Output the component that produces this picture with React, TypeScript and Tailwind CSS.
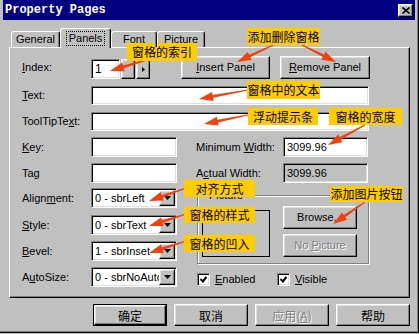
import React from 'react';

// win95 style bevels
const raised =
  'border border-t-white border-l-white border-r-black border-b-black shadow-[inset_-1px_-1px_0_#808080,inset_1px_1px_0_#dfdfdf] bg-[#c0c0c0]';
const sunken =
  'border border-t-[#808080] border-l-[#808080] border-r-white border-b-white shadow-[inset_1px_1px_0_#000000,inset_-1px_-1px_0_#dfdfdf]';

const callouts = [
  { text: '窗格的索引', cls: 'left-[127px] top-[43px] w-[70px] h-[18px]' },
  { text: '添加删除窗格', cls: 'left-[247px] top-[28px] w-[73px] h-[17px]' },
  { text: '窗格中的文本', cls: 'left-[247px] top-[81px] w-[73px] h-[18px]' },
  { text: '浮动提示条', cls: 'left-[248px] top-[108px] w-[70px] h-[17px]' },
  { text: '窗格的宽度', cls: 'left-[329px] top-[108px] w-[73px] h-[17px]' },
  { text: '对齐方式', cls: 'left-[184px] top-[180px] w-[71px] h-[17px]' },
  { text: '窗格的样式', cls: 'left-[184px] top-[207px] w-[71px] h-[16px]' },
  { text: '窗格的凹入', cls: 'left-[184px] top-[235px] w-[71px] h-[17px]' },
  { text: '添加图片按钮', cls: 'left-[330px] top-[186px] w-[73px] h-[16px]' },
];

// tail x, tail y, tip x, tip y
const arrows: number[][] = [
  [156, 57, 110, 71],
  [273, 45, 237, 62],
  [302, 45, 336, 62],
  [248, 90, 199, 99],
  [248, 115, 204, 124],
  [365, 125, 328, 145],
  [186, 188, 149, 201],
  [186, 214, 149, 226],
  [186, 241, 149, 253],
  [365, 202, 333, 224],
];

function arrowPoints([x1, y1, x2, y2]: number[]) {
  const dx = x2 - x1;
  const dy = y2 - y1;
  const len = Math.sqrt(dx * dx + dy * dy);
  const ux = dx / len;
  const uy = dy / len;
  const px = -uy;
  const py = ux;
  const bx = x2 - ux * 14;
  const by = y2 - uy * 14;
  const pts = [
    [x1 + px * 0.6, y1 + py * 0.6],
    [bx + px * 1.4, by + py * 1.4],
    [bx + px * 4.5, by + py * 4.5],
    [x2, y2],
    [bx - px * 4.5, by - py * 4.5],
    [bx - px * 1.4, by - py * 1.4],
    [x1 - px * 0.6, y1 - py * 0.6],
  ];
  return pts.map((p) => p.map((n) => n.toFixed(1)).join(',')).join(' ');
}

function Btn({
  children,
  className = '',
  disabled = false,
}: {
  children: React.ReactNode;
  className?: string;
  disabled?: boolean;
}) {
  return (
    <div
      className={`${raised} flex items-center justify-center ${
        disabled ? 'text-[#808080] [text-shadow:1px_1px_0_#ffffff]' : ''
      } ${className}`}
    >
      {children}
    </div>
  );
}

function Field({ value = '', className = '', disabled = false }: { value?: string; className?: string; disabled?: boolean }) {
  return (
    <div className={`${sunken} ${disabled ? 'bg-[#c0c0c0]' : 'bg-white'} flex items-center pl-[3px] ${className}`}>
      {value}
    </div>
  );
}

function Combo({ value }: { value: string }) {
  return (
    <div className={`${sunken} bg-white w-[86px] h-[20px] p-[1px] flex items-center`}>
      <span className="flex-1 pl-[2px] overflow-hidden whitespace-nowrap">{value}</span>
      <div className={`${raised} w-[16px] h-full shrink-0 flex items-center justify-center`}>
        <svg width="7" height="4">
          <polygon points="0,0 7,0 3.5,4" fill="#000" />
        </svg>
      </div>
    </div>
  );
}

function Label({ children, className = 'w-[69px]' }: { children: React.ReactNode; className?: string }) {
  return <div className={`self-center shrink-0 whitespace-nowrap ${className}`}>{children}</div>;
}

function Check({ children }: { children: React.ReactNode }) {
  return (
    <div className="flex items-center">
      <div className={`${sunken} bg-white w-[13px] h-[13px] flex items-center justify-center`}>
        <svg width="7" height="7">
          <polyline points="0.5,3 2.8,5.5 6.5,1" fill="none" stroke="#000" strokeWidth="2" />
        </svg>
      </div>
      <span className="ml-[5px]">{children}</span>
    </div>
  );
}

const u = 'underline underline-offset-[1px]';

export default function App() {
  return (
    <div className="relative w-[419px] h-[334px] overflow-hidden bg-[#c0c0c0] font-['Liberation_Sans',sans-serif] text-[11px] leading-[13px] text-black">
      <div className="h-[333px] border-r border-b border-black shadow-[inset_-1px_-1px_0_#808080] px-[3px]">
        {/* Title bar */}
        <div className="h-[20px] bg-[#000080] flex items-center justify-between pl-[2px] pr-[2px]">
          <span className="font-['Liberation_Mono',monospace] font-bold text-[12px] text-white">Property Pages</span>
          <div className={`${raised} w-[15px] h-[13px] flex items-center justify-center`}>
            <svg width="8" height="7">
              <path d="M0.5 0.5 L7.5 6.5 M7.5 0.5 L0.5 6.5" stroke="#000" strokeWidth="1.6" />
            </svg>
          </div>
        </div>

        {/* Tabs */}
        <div className="mt-[8px] ml-[6px] h-[19px] flex items-end relative z-10">
          <div className="ml-[2px] w-[49px] h-[16px] border border-b-0 border-t-white border-l-white border-r-black rounded-t-[3px] shadow-[inset_-1px_0_0_#808080] flex items-center justify-center">
            General
          </div>
          <div className="w-[51px] h-[20px] -mb-[1px] bg-[#c0c0c0] border border-b-0 border-t-white border-l-white border-r-black rounded-t-[3px] shadow-[inset_-1px_0_0_#808080] flex items-start justify-center pt-[2px]">
            <span className="border border-dotted border-black px-[2px] leading-[13px]">Panels</span>
          </div>
          <div className="w-[46px] h-[16px] border border-b-0 border-t-white border-l-white border-r-black rounded-t-[3px] shadow-[inset_-1px_0_0_#808080] flex items-center justify-center">
            Font
          </div>
          <div className="w-[48px] h-[16px] border border-b-0 border-t-white border-l-white border-r-black rounded-t-[3px] shadow-[inset_-1px_0_0_#808080] flex items-center justify-center">
            Picture
          </div>
        </div>

        {/* Tab page */}
        <div className="ml-[6px] w-[401px] h-[251px] border border-t-white border-l-white border-r-black border-b-black shadow-[inset_-1px_-1px_0_#808080] pt-[8px] pl-[12px]">
          <div className="flex items-end h-[23px]">
            <Label>
              <span className={u}>I</span>ndex:
            </Label>
            <Field value="1" className="w-[29px] h-[20px] text-[12px]" />
            <Btn className="ml-[1px] w-[14px] h-[20px]">{null}</Btn>
            <Btn className="ml-[1px] w-[14px] h-[20px]">
              <svg width="3" height="5">
                <polygon points="0,0 3,2.5 0,5" fill="#000" />
              </svg>
            </Btn>
            <Btn className="ml-[31px] w-[89px] h-[23px]">
              <span>
                <span className={u}>I</span>nsert Panel
              </span>
            </Btn>
            <Btn className="ml-[10px] w-[90px] h-[23px]">
              <span>
                <span className={u}>R</span>emove Panel
              </span>
            </Btn>
          </div>

          <div className="flex mt-[7px] h-[19px]">
            <Label>
              <span className={u}>T</span>ext:
            </Label>
            <Field className="w-[278px] h-[19px]" />
          </div>

          <div className="flex mt-[7px] h-[19px]">
            <Label>
              ToolTipTe<span className={u}>x</span>t:
            </Label>
            <Field className="w-[278px] h-[19px]" />
          </div>

          <div className="flex mt-[6px] h-[20px]">
            <Label>
              <span className={u}>K</span>ey:
            </Label>
            <Field className="w-[86px] h-[20px]" />
            <Label className="ml-[19px] w-[87px]">
              Minimum <span className={u}>W</span>idth:
            </Label>
            <Field value="3099.96" className="w-[85px] h-[20px]" />
          </div>

          <div className="flex mt-[6px] h-[20px]">
            <Label>Tag</Label>
            <Field className="w-[86px] h-[20px]" />
            <Label className="ml-[19px] w-[87px]">
              A<span className={u}>c</span>tual Width:
            </Label>
            <Field value="3099.96" disabled className="w-[85px] h-[20px]" />
          </div>

          <div className="flex mt-[5px]">
            <div className="w-[155px]">
              <div className="flex h-[20px]">
                <Label>
                  Align<span className={u}>m</span>ent:
                </Label>
                <Combo value="0 - sbrLeft" />
              </div>
              <div className="flex h-[20px] mt-[7px]">
                <Label>
                  <span className={u}>S</span>tyle:
                </Label>
                <Combo value="0 - sbrText" />
              </div>
              <div className="flex h-[20px] mt-[6px]">
                <Label>
                  <span className={u}>B</span>evel:
                </Label>
                <Combo value="1 - sbrInset" />
              </div>
              <div className="flex h-[20px] mt-[6px]">
                <Label>
                  A<span className={u}>u</span>toSize:
                </Label>
                <Combo value="0 - sbrNoAutoSize" />
              </div>
            </div>

            <div className="ml-[20px] mt-[7px]">
              <div className="relative w-[172px] h-[69px] border border-[#808080] shadow-[inset_1px_1px_0_#ffffff,1px_1px_0_#ffffff] flex pl-[4px]">
                <span className="absolute left-[9px] -top-[7px] px-[2px] bg-[#c0c0c0]">Picture</span>
                <div className="mt-[14px] w-[68px] h-[47px] border border-black" />
                <div className="ml-[13px] mt-[10px] flex flex-col gap-[5px]">
                  <Btn className="w-[74px] h-[23px]">Browse...</Btn>
                  <Btn disabled className="w-[74px] h-[23px]">
                    <span>
                      No <span className={u}>P</span>icture
                    </span>
                  </Btn>
                </div>
              </div>
              <div className="mt-[9px] flex">
                <div className="w-[80px]">
                  <Check>
                    <span className={u}>E</span>nabled
                  </Check>
                </div>
                <Check>
                  <span className={u}>V</span>isible
                </Check>
              </div>
            </div>
          </div>
        </div>

        {/* Dialog buttons */}
        <div className="ml-[6px] mt-[6px] w-[401px] flex justify-end gap-[7px] font-['Noto_Sans_CJK_SC',sans-serif] text-[12px]">
          <div className="w-[74px] h-[22px] border border-black">
            <Btn className="w-full h-full">确定</Btn>
          </div>
          <Btn className="w-[74px] h-[22px]">取消</Btn>
          <Btn disabled className="w-[74px] h-[22px]">
            <span>
              应用(<span className={u}>A</span>)
            </span>
          </Btn>
          <Btn className="w-[74px] h-[22px]">帮助</Btn>
        </div>
      </div>

      {/* Annotation arrows */}
      <svg className="absolute inset-0 pointer-events-none" width="419" height="334">
        {arrows.map((a, i) => (
          <polygon key={i} points={arrowPoints(a)} fill="#f4400c" />
        ))}
      </svg>

      {/* Annotation labels */}
      {callouts.map((c) => (
        <div
          key={c.text}
          className={`absolute ${c.cls} bg-[#ffcc00] flex items-center justify-center whitespace-nowrap font-['Noto_Sans_CJK_SC',sans-serif] text-[12px] leading-[14px] text-black`}
        >
          {c.text}
        </div>
      ))}
    </div>
  );
}
